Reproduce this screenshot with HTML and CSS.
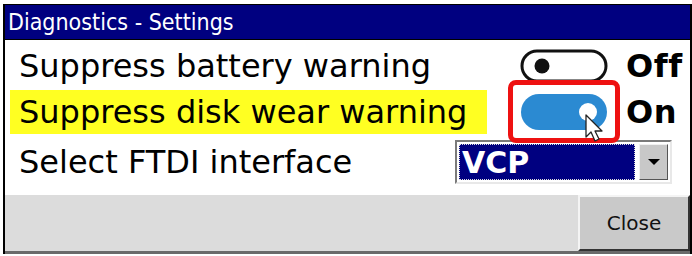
FILE: index.html
```html
<!DOCTYPE html>
<html>
<head>
<meta charset="utf-8">
<link rel="stylesheet" href="styles.css">
</head>
<body>
<div class="window">
  <div class="titlebar">Diagnostics - Settings</div>
  <div class="content">
    <div class="row row1">
      <div class="label">Suppress battery warning</div>
      <div class="ctrl">
        <div class="toggle-wrap">
          <svg class="toggle" width="88" height="34" viewBox="0 0 88 34">
            <rect x="2" y="2" width="84" height="30" rx="15" fill="#fff" stroke="#111" stroke-width="3"/>
            <circle cx="22" cy="17" r="7.5" fill="#111"/>
          </svg>
        </div>
        <div class="state">Off</div>
      </div>
    </div>
    <div class="row row2">
      <div class="label hl">Suppress disk wear warning</div>
      <div class="ctrl">
        <div class="toggle-wrap focus">
          <svg class="toggle" width="88" height="38" viewBox="0 0 88 38">
            <rect x="1" y="1" width="86" height="36" rx="18" fill="#2b8ad2"/>
            <circle cx="68" cy="19" r="9" fill="#fff"/>
          </svg>
          <svg class="cursor" width="22" height="30" viewBox="0 0 22 30">
            <path d="M1 1 L1 23 L6 18 L10 27 L14 25 L10 17 L17 17 Z" fill="#fff" stroke="#222" stroke-width="1.3" stroke-linejoin="round"/>
          </svg>
        </div>
        <div class="state">On</div>
      </div>
    </div>
    <div class="row row3">
      <div class="label">Select FTDI interface</div>
      <div class="select">
        <div class="sel-value"><span>VCP</span></div>
        <div class="sel-btn"><span class="tri"></span></div>
      </div>
    </div>
  </div>
  <div class="footer">
    <button class="close">Close</button>
  </div>
</div>
</body>
</html>
```
FILE: styles.css
```css
html, body {
  margin: 0;
  padding: 0;
  background: #fff;
  width: 692px;
  height: 256px;
  overflow: hidden;
}
.window {
  margin: 4px 0 0 3px;
  width: 685px;
  height: 249px;
  border-left: 2px solid #000;
  border-right: 2px solid #000;
  border-top: 1px solid #000;
  display: flex;
  flex-direction: column;
  font-family: "DejaVu Sans", Verdana, sans-serif;
}
.titlebar {
  height: 34px;
  background: #000080;
  color: #fff;
  font-family: "DejaVu Sans Condensed", "DejaVu Sans", sans-serif;
  font-size: 23px;
  line-height: 34px;
  padding-left: 3px;
  border-bottom: 1px solid #000;
}
.content {
  background: #fff;
  height: 155px;
  display: flex;
  flex-direction: column;
  padding-top: 2px;
  box-sizing: border-box;
}
.row {
  display: flex;
  align-items: center;
  justify-content: space-between;
  height: 46px;
}
.row1 {
  height: 47px;
}
.row3 {
  margin-top: 4px;
}
.label {
  font-size: 32px;
  color: #000;
  padding-left: 14px;
  height: 44px;
  line-height: 44px;
  letter-spacing: 0;
}
.label.hl {
  background: #ffff22;
  margin-left: 5px;
  padding-left: 9px;
  width: 468px;
}
.ctrl {
  display: flex;
  align-items: center;
  margin-right: 6px;
}
.toggle-wrap {
  position: relative;
  width: 112px;
  height: 46px;
  display: flex;
  align-items: center;
  justify-content: center;
  box-sizing: border-box;
}
.toggle-wrap.focus {
  height: 63px;
  margin: -9px 0 -8px 0;
  border: 5px solid #ee1111;
  border-radius: 8px;
}
.cursor {
  position: absolute;
  left: 72px;
  top: 29px;
}
.state {
  font-size: 32px;
  font-weight: bold;
  width: 58px;
  padding-left: 6px;
  letter-spacing: 0.5px;
}
.select {
  display: flex;
  width: 217px;
  height: 44px;
  box-sizing: border-box;
  border: 2px solid;
  border-color: #7a7a7a #e8e8e8 #e8e8e8 #7a7a7a;
  background: #fff;
  padding: 2px;
  margin-right: 18px;
  gap: 4px;
}
.sel-value {
  flex: 1;
  background: #000080;
  border: 1px dotted #ddd;
  color: #fff;
  font-size: 30px;
  font-weight: bold;
  line-height: 36px;
  padding-left: 2px;
}
.sel-btn {
  width: 27px;
  background: #c8c8c8;
  border: 1px solid;
  border-color: #f0f0f0 #555 #555 #f0f0f0;
  display: flex;
  align-items: center;
  justify-content: center;
}
.tri {
  width: 0;
  height: 0;
  border-left: 6px solid transparent;
  border-right: 6px solid transparent;
  border-top: 6px solid #000;
}
.footer {
  flex: 1;
  background: #dcdcdc;
  border-bottom: 3px solid #6a6a6a;
  display: flex;
  justify-content: flex-end;
}
.close {
  width: 112px;
  height: 100%;
  background: #c9c9c9;
  border: 2px solid;
  border-color: #f4f4f4 #333 #333 #f4f4f4;
  font-family: "DejaVu Sans", sans-serif;
  font-size: 20px;
  color: #111;
  padding: 0;
}
```
